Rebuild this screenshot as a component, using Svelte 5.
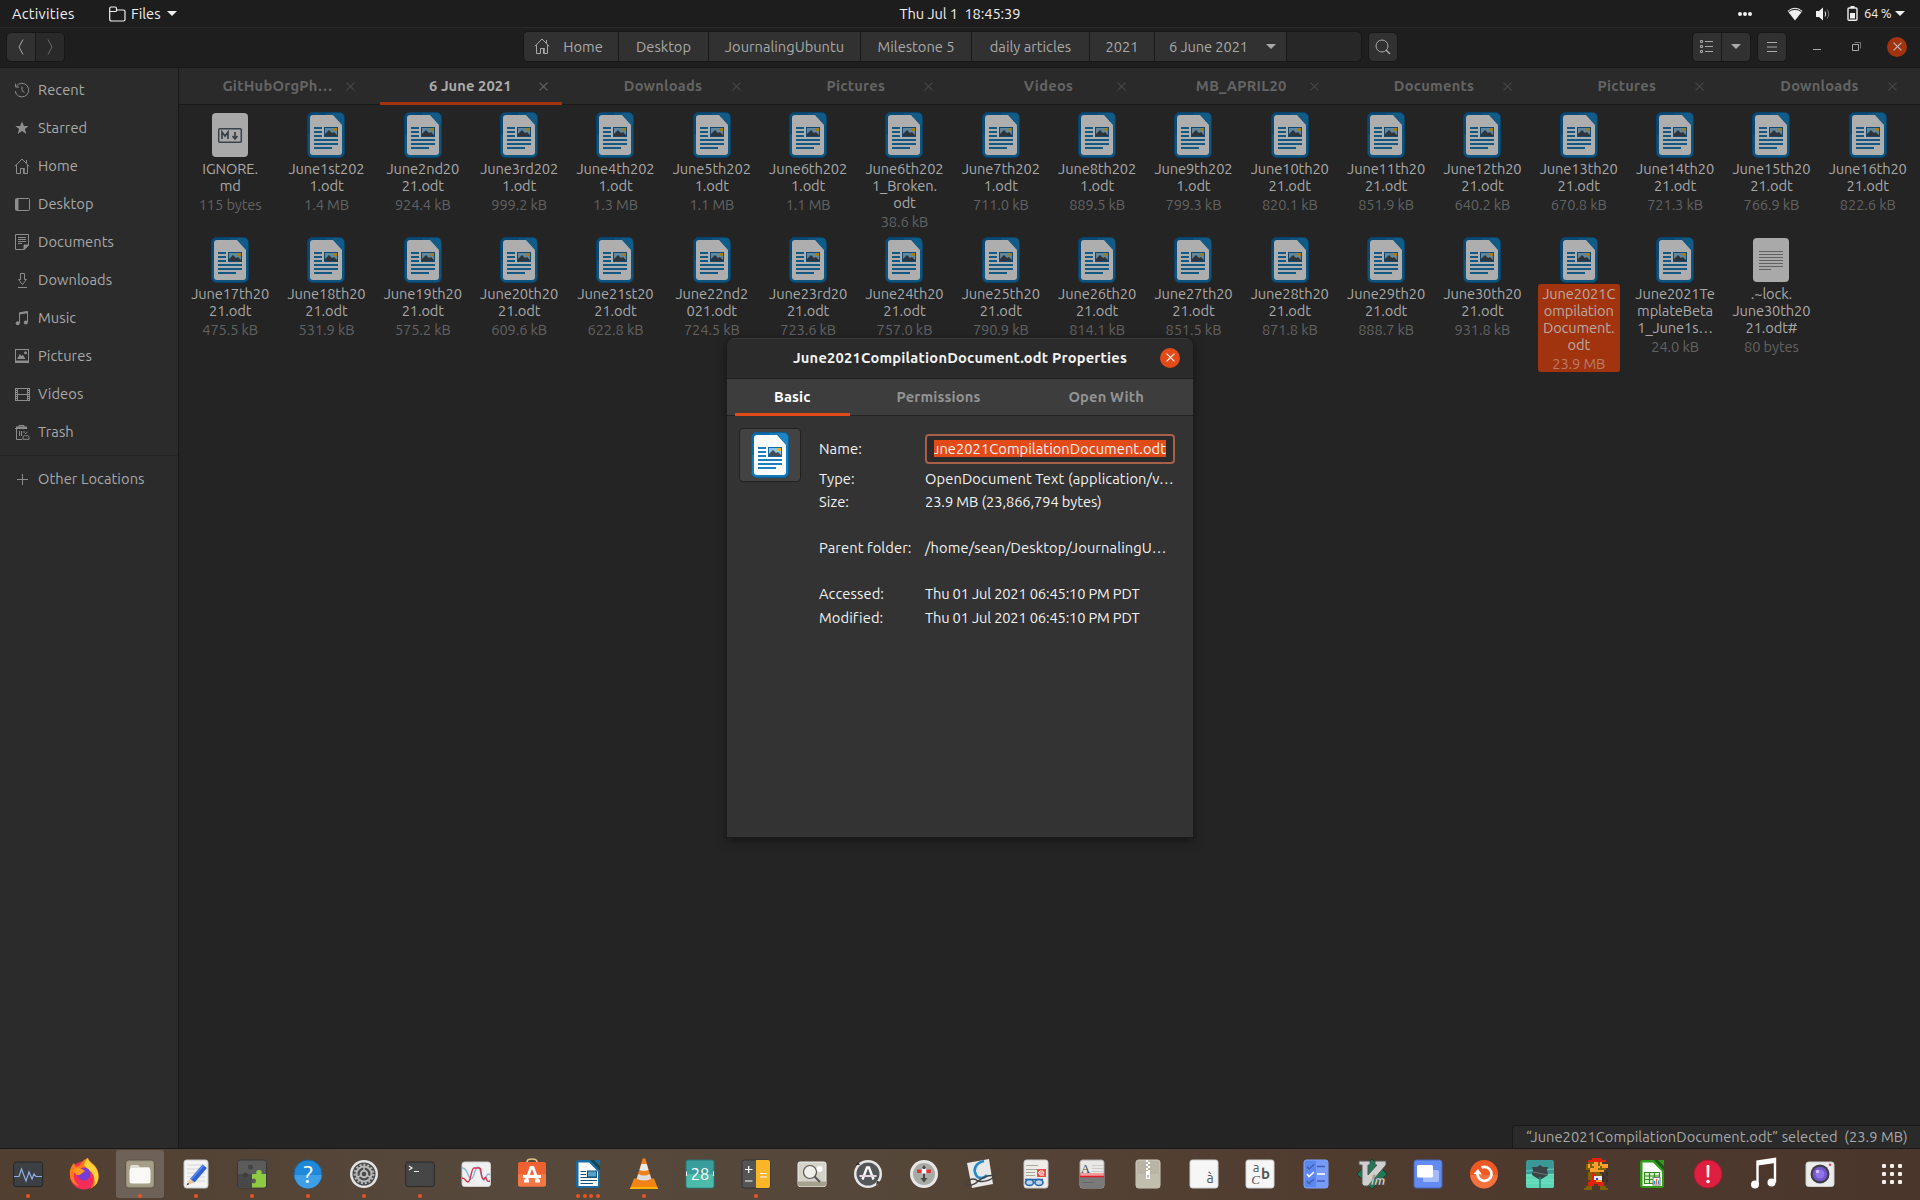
<script>
  const files = [
    ['IGNORE.\nmd', '115 bytes', 'md'],
    ['June1st202\n1.odt', '1.4 MB'], ['June2nd20\n21.odt', '924.4 kB'], ['June3rd202\n1.odt', '999.2 kB'],
    ['June4th202\n1.odt', '1.3 MB'], ['June5th202\n1.odt', '1.1 MB'], ['June6th202\n1.odt', '1.1 MB'],
    ['June6th202\n1_Broken.\nodt', '38.6 kB'], ['June7th202\n1.odt', '711.0 kB'], ['June8th202\n1.odt', '889.5 kB'],
    ['June9th202\n1.odt', '799.3 kB'], ['June10th20\n21.odt', '820.1 kB'], ['June11th20\n21.odt', '851.9 kB'],
    ['June12th20\n21.odt', '640.2 kB'], ['June13th20\n21.odt', '670.8 kB'], ['June14th20\n21.odt', '721.3 kB'],
    ['June15th20\n21.odt', '766.9 kB'], ['June16th20\n21.odt', '822.6 kB'], ['June17th20\n21.odt', '475.5 kB'],
    ['June18th20\n21.odt', '531.9 kB'], ['June19th20\n21.odt', '575.2 kB'], ['June20th20\n21.odt', '609.6 kB'],
    ['June21st20\n21.odt', '622.8 kB'], ['June22nd2\n021.odt', '724.5 kB'], ['June23rd20\n21.odt', '723.6 kB'],
    ['June24th20\n21.odt', '757.0 kB'], ['June25th20\n21.odt', '790.9 kB'], ['June26th20\n21.odt', '814.1 kB'],
    ['June27th20\n21.odt', '851.5 kB'], ['June28th20\n21.odt', '871.8 kB'], ['June29th20\n21.odt', '888.7 kB'],
    ['June30th20\n21.odt', '931.8 kB'], ['June2021C\nompilation\nDocument.\nodt', '23.9 MB', 'odt', true],
    ['June2021Te\nmplateBeta\n1_June1s…', '24.0 kB'], ['.~lock.\nJune30th20\n21.odt#', '80 bytes', 'txt']
  ].map(([name, size, kind = 'odt', selected = false]) => ({ name, size, kind, selected }));

  const tabs = ['GitHubOrgPh…', '6 June 2021', 'Downloads', 'Pictures', 'Videos', 'MB_APRIL20', 'Documents', 'Pictures', 'Downloads'];
  const places = ['Recent', 'Starred', 'Home', 'Desktop', 'Documents', 'Downloads', 'Music', 'Pictures', 'Videos', 'Trash'];
  const crumbs = [
    { t: 'Desktop', w: 90 }, { t: 'JournalingUbuntu', w: 152 }, { t: 'Milestone 5', w: 111 },
    { t: 'daily articles', w: 118 }, { t: '2021', w: 65 }
  ];
  const dock = [
    'monitor', 'firefox', 'files', 'editor', 'puzzle', 'help', 'settings', 'terminal', 'graph', 'software', 'writer',
    'vlc', 'calendar', 'calculator', 'viewer', 'updater', 'joystick', 'okular', 'reader', 'scanner', 'archive',
    'chars', 'fonts', 'todo', 'vim', 'windows', 'refresh', 'mines', 'mario', 'calc', 'alert', 'music', 'camera'
  ];
  const running = { monitor: 1, files: 1, editor: 1, puzzle: 1, help: 1, settings: 1, terminal: 1, writer: 4, vlc: 1, calculator: 1 };

  const sprite = [
    '....RRRRR....', '..RRRRRRRRR..', '..BBBSSBS....', '.BSBSSSBSSSS.', '.BSBBSSSBSSS.', '.BBSSSSBBBB..', '...SSSSSSS...',
    '..BBRBBB...k.', '..BBRRBBBk.k.', '..BBRWWWWkk..', '..BBRWPWWk.k.', '...RRRSSSk.k.', '..RRRRRRRR...', '..RRR..RRR...',
    '.BBB....BBB..', 'BBBB....BBBB.'
  ];
  const ink = { R: '#e3210b', B: '#7d6400', S: '#ffa02e', W: '#e8e4f0', P: '#4b35d8', k: '#3a302b' };
  const pixels = sprite.flatMap((row, y) => [...row].map((c, x) => ({ x, y, c })).filter((p) => p.c !== '.'));
</script>

{#snippet odt()}
  <svg viewBox="0 0 38 46" width="38" height="46">
    <rect x=".5" y=".5" width="37" height="45" rx="5" fill="#147ab8" stroke="#0a5f96" />
    <path d="M1 23V6Q1 1 6 1H19V23Z" fill="#086aab" />
    <path d="M26 1H32Q37 1 37 6V13H35Z" fill="#1a84c4" />
    <path d="M6 3H26L35 13V40Q35 43 32 43H6Q3 43 3 40V6Q3 3 6 3Z" fill="#fcfcfc" />
    <path d="M7 16H15M7 20H15M7 24H15M7 28H31M7 32H31M7 36H25" stroke="#1c7fbd" stroke-width="2" />
    <rect x="17" y="15" width="14" height="10" fill="#116aa6" />
    <rect x="18" y="16" width="12" height="8" fill="#8cc4e2" />
    <path d="M18 24V22L22 18L25 21L27 20L30 23V24Z" fill="#444c55" />
    <rect x="26.5" y="16" width="3.5" height="3" fill="#f5b416" />
  </svg>
{/snippet}

{#snippet cross(size)}
  <svg width={size} height={size} viewBox="0 0 8 8" fill="none" stroke="currentColor"><path d="M.5 .5L7.5 7.5M7.5 .5L.5 7.5" /></svg>
{/snippet}

{#snippet house()}
  <svg width="16" height="16" viewBox="0 0 16 16" fill="none" stroke="currentColor"><path d="M.8 8.4L8 1L15.2 8.4M2.5 7.2V15.5H6.5V10.5H9.5V15.5H13.5V7.2M12.5 2V5.2" /><path d="M10 10V15.5" stroke-width="1.6" /></svg>
{/snippet}

{#snippet place(name)}
  <svg width="16" height="16" viewBox="0 0 16 16" fill="none" stroke="currentColor">
    {#if name === 'Recent'}
      <path d="M2.3 4.3A6.8 6.8 0 1 1 1.2 9M1.6 1.5V5H5M8 4.5V8.5L10.5 10.5" />
    {:else if name === 'Starred'}
      <path d="M8 1.5L9.9 6H14.6L10.9 9L12.3 14L8 11.1L3.7 14L5.1 9L1.4 6H6.1Z" fill="currentColor" stroke="none" />
    {:else if name === 'Desktop'}
      <rect x="1.5" y="2.5" width="14" height="12" rx="1" /><path d="M3 3V14" stroke-width="3" />
    {:else if name === 'Documents'}
      <path d="M1.5 .5H14.5V11L10.5 15.5H1.5ZM4 3.5H12M4 5.5H12M4 7.5H12M4 9.5H8" /><path d="M10 11H14.5L10 15.5Z" fill="currentColor" />
    {:else if name === 'Downloads'}
      <path d="M6.5 1.5H10.5V7.5H12.5L8.5 12.5L4.5 7.5H6.5ZM4 15.5H13" />
    {:else if name === 'Music'}
      <path d="M5.5 13V2.8L13.5 1.5V12" /><path d="M5.5 3.5L13.5 2.3" stroke-width="2" /><circle cx="3.7" cy="13.2" r="2" fill="currentColor" stroke="none" /><circle cx="11.8" cy="12.4" r="2" fill="currentColor" stroke="none" />
    {:else if name === 'Pictures'}
      <rect x="1.5" y="1.5" width="13" height="13" /><path d="M1.5 13.5H14.5" stroke-width="2" /><path d="M3 11L6 6L7.5 8L9 6.8L11.5 11Z" fill="currentColor" stroke="none" /><circle cx="11.5" cy="4.8" r="1.5" fill="currentColor" stroke="none" />
    {:else if name === 'Videos'}
      <path d="M4 2.5H13M4 8.5H13M4 14.5H13M3.5 2V15M13.5 2V15M1.5 2V15M15.5 2V15" /><path d="M2.5 2V15M14.5 2V15" stroke-dasharray="1 1" />
    {:else}
      <path d="M1 4.5H13M2.5 4.5V15.5H8M5 4V1.5H10V4M5.5 7V12M7.5 7V12M10 7V9" /><path d="M2 3.5H13" stroke-width="2" /><path d="M9 14C9 11 11 11 12 12C14 11 15.5 12 15 15.3H9ZM11 10L13.5 8" />
    {/if}
  </svg>
{/snippet}

{#snippet app(name)}
  <svg width="32" height="34" viewBox="0 0 32 34">
    {#if name === 'monitor'}
      <rect x="1.7" y="5" width="29" height="24.5" rx="2.5" fill="#3d4043" stroke="#222527" /><path d="M2 19.5H7L9.5 12L14 24L17 15L20 22L22 17L24 19.5H30" fill="none" stroke="#91aee9" stroke-width="1.2" />
    {:else if name === 'firefox'}
      <circle cx="16" cy="18.5" r="14" fill="#f52d58" /><path d="M2 18C1 13 4 8 6 6L8 10L12 8C13 5 18 1 20 1C20 4 27 7 29 12C33 21 29 29 22 32C27 26 27 19 22 13C18 9 10 10 6 17C5 22 8 27 12 29C5 28 2 23 2 18Z" fill="#ff7a1a" /><path d="M16 8C17 4 19 2 20 1C20 5 27 8 29 13C32 20 30 27 26 29C28 23 26 17 22 14Z" fill="#ffd13a" /><circle cx="16" cy="17" r="6.5" fill="#7a3ad6" /><path d="M5 13Q9 8 17 14L13 17Q9 20 7 16Z" fill="#ff9a1f" />
    {:else if name === 'files'}
      <rect x="1.5" y="3" width="29" height="28" rx="3" fill="#989078" stroke="#5d5748" /><rect x="3" y="4.5" width="26" height="25" rx="2" fill="#a69e88" /><path d="M6 11Q6 8 8 8H14L16 10H24Q26 10 26 12V15H6Z" fill="#e0ddd3" /><rect x="5.5" y="11" width="21" height="15.5" rx="2.5" fill="#faf9f6" />
    {:else if name === 'editor'}
      <rect x="4" y="3" width="24" height="28" rx="2.5" fill="#f4f4f4" stroke="#c7c7c7" /><path d="M7 8H25M7 12H25M7 16H25M7 20H25M7 24H25" stroke="#d5d5d5" /><path d="M10 22L22.5 7.5L27 11L14.5 25.5Z" fill="#2c62d4" /><path d="M11 22.5L23.5 8.5" stroke="#5b8bf0" stroke-width="1.5" /><path d="M10 22L14.5 25.5L7 28Z" fill="#f0c592" /><path d="M8 25.5L9 27.3L6.5 28.2Z" fill="#222" />
    {:else if name === 'puzzle'}
      <rect x="1.5" y="3" width="29" height="28" rx="2.5" fill="#5b5b5c" stroke="#363636" /><path d="M2 17H16V31H4Q2 31 2 29Z" fill="#484849" /><path d="M16 17H20.5Q19.5 13 23 13Q26.500 13 25.500 17H30V28.500Q30 30.500 28 30.500H16V26Q20 27.500 20 24Q20 20.500 16 22Z" fill="#8fcb42" /><circle cx="9.500" cy="18" r="2.500" fill="#3f3f40" /><circle cx="14.500" cy="10" r="2.500" fill="#444" />
    {:else if name === 'help'}
      <circle cx="16" cy="17" r="14" fill="#2088d8" stroke="#17639f" /><path d="M2.500 18H29.500A13.500 13.500 0 0 1 2.500 18" fill="#3e9fe6" /><text x="16" y="26" class="g" font-size="25" fill="#fff">?</text>
    {:else if name === 'settings'}
      <circle cx="16" cy="17" r="14" fill="#e3e3e3" /><circle cx="16" cy="17" r="11.500" fill="#4a4a4a" /><circle cx="16" cy="17" r="7.500" fill="none" stroke="#b9b9b9" stroke-width="2" /><circle cx="16" cy="17" r="9.300" fill="none" stroke="#b9b9b9" stroke-width="2" stroke-dasharray="2 1.900" /><circle cx="16" cy="17" r="3.300" fill="none" stroke="#b9b9b9" stroke-width="2" /><path d="M16 10V14M10 20L13 18.500M22 20L19 18.500" stroke="#b9b9b9" stroke-width="1.500" />
    {:else if name === 'terminal'}
      <rect x="1.700" y="5" width="28.600" height="24.500" rx="2.500" fill="#464646" stroke="#292929" /><path d="M5 9L8 11L5 13M10 14.500H15" fill="none" stroke="#eee" stroke-width="1.200" />
    {:else if name === 'graph'}
      <rect x="2" y="5" width="28.500" height="24.500" rx="2.500" fill="#f0f0f0" stroke="#ccc" /><path d="M2 11C8 10 8 22 11 22S15 10 18 10S21 23 24 23S26 14 30 18" fill="none" stroke="#86b5dc" stroke-width="1.400" /><path d="M2 21C6 21 5 25 8 25S11 11 14 11S16 11 19 11S20 14 22 20S25 18 26 21S28 25 30 24" fill="none" stroke="#d8324c" stroke-width="1.400" />
    {:else if name === 'software'}
      <path d="M11 8V5Q11 2 16 2T21 5V8" fill="none" stroke="#e6c48a" stroke-width="1.700" /><rect x="2" y="5" width="28" height="24.500" rx="2" fill="#ef6130" /><path d="M2 17H30V27.500Q30 29.500 28 29.500H4Q2 29.500 2 27.500Z" fill="#f47846" /><path d="M10.500 23L15 10.500H17L21.500 23M7 19.500H25M8 24H13M19 24H24" fill="none" stroke="#fff" stroke-width="2.800" />
    {:else if name === 'writer' || name === 'calc'}
      {@const c = name === 'writer' ? '#176aa2' : '#2f9b16'}
      <rect x="4" y="3" width="24" height="28" rx="2.500" fill={c} /><path d="M6.500 5.500H17L26 14.500V29H6.500Z" fill="#fafafa" /><path d="M18 3L28 13.500V5Q28 3 26 3Z" fill="#16321f" opacity=".650" /><path d="M22 3H28V9Z" fill={c} />
      {#if name === 'writer'}
        <path d="M8.500 14.500H14M8.500 17.500H14M8.500 20.500H25M8.500 23.500H25M8.500 26.500H21" stroke="#14527d" stroke-width="1.200" /><rect x="15.500" y="14" width="9" height="6" fill="#54a2ca" stroke="#174e72" />
      {:else}
        <path d="M8.500 15.500H23.500V26.500H8.500ZM8.500 19H23.500M8.500 22.500H23.500M13.500 15.500V26.500M18.500 15.500V26.500" fill="#d9f4ca" stroke="#2e8c1d" stroke-width="1.200" /><rect x="17" y="20.500" width="7" height="7.500" fill="#fff" stroke="#777" /><path d="M18.500 27V24" stroke="#2b80c9" stroke-width="1.500" /><path d="M20.500 27V22" stroke="#e5673c" stroke-width="1.500" /><path d="M22.500 27V23.500" stroke="#2b80c9" />
      {/if}
    {:else if name === 'vlc'}
      <path d="M6 21.500H26L30 32H2Z" fill="#f28413" /><path d="M2.800 30H29.200L30 32H2Z" fill="#ffb000" /><path d="M14.500 2Q16 .5 17.500 2L24 24Q16 29 8 24Z" fill="#f0801a" /><path d="M13.300 7H18.700L20.500 13Q16 15 11.500 13Z" fill="#e9e9e9" /><path d="M10.200 17Q16 20 21.800 17L23.300 22Q16 25 8.700 22Z" fill="#ddd" />
    {:else if name === 'calendar'}
      <rect x="2" y="3" width="28" height="28" rx="2" fill="#399d9c" stroke="#267774" /><path d="M2.500 17H29.500V29Q29.500 30.500 28 30.500H4Q2.500 30.500 2.500 29Z" fill="#4dbbaa" /><path d="M2.500 14.500V19M29.500 14.500V19" stroke="#fff" /><text x="16" y="23" class="g" font-size="16.500" fill="#fff">28</text>
    {:else if name === 'calculator'}
      <rect x="2" y="3" width="28" height="28" rx="2.500" fill="#555" stroke="#323232" /><path d="M16 3H28Q30 3 30 5V29Q30 31 28 31H16Z" fill="#fbb628" /><path d="M5 12.500H12.500M8.700 9V16M5 24H12.500M20 16.500H27M20 20H27" stroke="#fff" stroke-width="1.200" />
    {:else if name === 'viewer'}
      <rect x="2" y="5" width="28" height="24.500" rx="2" fill="#d5d3c9" stroke="#eee" /><path d="M2 24.500H30V28L28 29.500H4L2 28Z" fill="#a6a18e" /><circle cx="23.500" cy="12" r="3" fill="#fff" /><circle cx="14" cy="15" r="6.500" fill="#efefec" stroke="#56544e" stroke-width="1.200" /><path d="M18.500 19.500L24 25" stroke="#555" stroke-width="2" />
    {:else if name === 'updater'}
      <circle cx="16" cy="17" r="14" fill="#e7e7e7" /><circle cx="16" cy="17" r="11.500" fill="#54565a" /><path d="M10.500 22.500L15 10.500H17L21.500 22.500" fill="none" stroke="#fff" stroke-width="2.400" /><path d="M7.500 19H24.500" stroke="#e9d6e4" stroke-width="2" /><path d="M4 8L6 5L8 8ZM24 28L29 25L25 24Z" fill="#333" />
    {:else if name === 'joystick'}
      <circle cx="16" cy="17" r="14" fill="#e6e6e6" /><circle cx="16" cy="17" r="11" fill="#a9aca5" /><path d="M16 8L18 11H17V21H19.500L16 25.500L12.500 21H15V11H14Z" fill="#4a4a4a" /><rect x="9" y="12.500" width="14" height="3.500" rx="1" fill="#e6303c" /><rect x="13.700" y="12" width="4.600" height="4.500" fill="#fff" />
    {:else if name === 'okular'}
      <path d="M3 6L25 2L29 27L8 31Z" fill="#e8e8e8" /><path d="M20 4C11 6 9 13 12 18C14 22 20 22 23 18" fill="none" stroke="#2488c9" stroke-width="2.600" /><path d="M1 27Q8 19 14 24Q22 26 30 20M2 28Q10 29 14 24Q24 17 31 19" fill="none" stroke="#444" stroke-width="1.500" />
    {:else if name === 'reader'}
      <rect x="4" y="3" width="24" height="28" rx="2.500" fill="#edece8" stroke="#ccc" /><path d="M6 8.500H18M6 12.500H26M6 15.500H15M6 18.500H15" stroke="#aaa799" /><rect x="17" y="12" width="9" height="8" fill="#e94f45" /><path d="M19 16H24Q23 13 20 14T20 18H24" fill="none" stroke="#fff" /><path d="M5 22.500H23M14 23.500L15 22" stroke="#2565ac" stroke-width="1.300" /><ellipse cx="9.500" cy="25.500" rx="4" ry="3" fill="#bcd5ed" stroke="#2565ac" stroke-width="1.600" /><ellipse cx="19" cy="25.500" rx="4" ry="3" fill="#bcd5ed" stroke="#2565ac" stroke-width="1.600" />
    {:else if name === 'scanner'}
      <rect x="4" y="3" width="24" height="28" rx="2.500" fill="#e9e8e6" stroke="#aaa" /><path d="M4 19H28V29Q28 31 26 31H6Q4 31 4 29Z" fill="#7a7a7a" /><text x="9.500" y="16" class="g serif" font-size="13" fill="#444">A</text><path d="M16 8.500H27M16 11.500H27M16 14.500H27" stroke="#ccc" /><path d="M4 17.500H28" stroke="#f33" stroke-width="3" opacity=".4" /><path d="M4 19.500H28" stroke="#e31b22" stroke-width="1.500" /><path d="M6 25.500H17" stroke="#686868" />
    {:else if name === 'archive'}
      <rect x="4" y="3" width="24" height="28" rx="2.500" fill="#b9b4a4" stroke="#d0ccbf" /><path d="M4 17H28V29Q28 31 26 31H6Q4 31 4 29Z" fill="#c2beae" /><path d="M15 3V15" stroke="#fff" stroke-width="2" stroke-dasharray="2 2" /><path d="M17 5V15" stroke="#fff" stroke-width="2" stroke-dasharray="2 2" /><path d="M14 14H18V22H14Z" fill="#fff" /><rect x="15.500" y="18" width="1" height="2.500" fill="#777" />
    {:else if name === 'chars'}
      <rect x="2" y="3" width="28" height="28" rx="2.500" fill="#f6f6f6" stroke="#d1d1d1" /><text x="22" y="26" class="g" font-size="14" fill="#555">à</text>
    {:else if name === 'fonts'}
      <rect x="2" y="3" width="28" height="28" rx="2.500" fill="#f6f6f6" stroke="#d1d1d1" /><text x="12" y="15" class="g" font-size="13" fill="#555">a</text><text x="11.500" y="27" class="g serif" font-size="13" font-style="italic" fill="#555">C</text><text x="21.500" y="22" class="g" font-size="15" font-weight="600" fill="#555">b</text>
    {:else if name === 'todo'}
      <rect x="4" y="3" width="24" height="28" rx="2.500" fill="#5d87f0" stroke="#88a8f7" /><path d="M16 3H26Q28 3 28 5V29Q28 31 26 31H16Z" fill="#779cf8" /><path d="M7 9.500L9 12L14 7.500M7 24L9 26.500L14 22M17 9.500H25M17 24H25" fill="none" stroke="#405fae" stroke-width="1.400" /><path d="M7 17L9 19.500L14 15M17 17H25" fill="none" stroke="#fff" stroke-width="1.600" />
    {:else if name === 'vim'}
      <path d="M16 2L31 17L16 32L1 17Z" fill="#1e7a55" stroke="#103f30" /><path d="M3 4H14V8H12V18L21 8H19V4H30V8L12 29H8L6 27V8H3Z" fill="#cfcfcf" stroke="#555" /><text x="22" y="28" class="g" font-size="13" font-weight="700" font-style="italic" fill="#e4e4e4" stroke="#444" stroke-width=".4">im</text>
    {:else if name === 'windows'}
      <rect x="2" y="3" width="28" height="28" rx="2.500" fill="#648bf1" stroke="#4266be" /><rect x="11" y="13" width="16" height="12" rx="1.500" fill="#a4bbf9" /><rect x="5" y="8" width="16" height="12.500" rx="1.500" fill="#fff" />
    {:else if name === 'refresh'}
      <circle cx="16" cy="17" r="14" fill="#ee5823" /><path d="M2.500 18H29.500A13.500 13.500 0 0 1 2.500 18" fill="#f3723e" /><path d="M13.500 10.500A7 7 0 1 1 9.500 17" fill="none" stroke="#fff" stroke-width="2.700" /><path d="M5.500 17L10 12L14 17.500Z" fill="#fff" />
    {:else if name === 'mines'}
      <rect x="2" y="3" width="28" height="28" rx="2" fill="#3a9896" /><path d="M2 17H30V29Q30 31 28 31H4Q2 31 2 29Z" fill="#5cd6b4" /><path d="M2 14L30 12M2 19L30 17M2 23H30M2 26H30" stroke="#88ead0" opacity=".6" /><path d="M16 8L19 10L24 10L23 13L24 18L16 23L8 18L9 13L8 10H13Z" fill="#3b4346" /><path d="M16 20V31" stroke="#2d8575" stroke-width="1.500" /><path d="M9 15L24 18" stroke="#6a7678" />
    {:else if name === 'mario'}
      <g transform="translate(4 1) scale(2)" shape-rendering="crispEdges">{#each pixels as p}<rect x={p.x} y={p.y} width="1" height="1" fill={ink[p.c]} />{/each}</g>
    {:else if name === 'alert'}
      <circle cx="16" cy="17" r="14" fill="#df1f3f" stroke="#ae1730" /><path d="M15 8.500H17L16.700 20H15.300Z" fill="#fff" stroke="#fff" /><circle cx="16" cy="24.500" r="1.800" fill="#fff" />
    {:else if name === 'music'}
      <path d="M9.500 27V4.500L27 2V25.500" fill="none" stroke="#fff" stroke-width="2.400" /><path d="M9.500 6.500L27 4" stroke="#fff" stroke-width="4" /><circle cx="7" cy="27.500" r="4" fill="#fff" /><circle cx="23.500" cy="25.500" r="4" fill="#fff" />
    {:else if name === 'camera'}
      <rect x="2" y="5" width="28" height="24.500" rx="2.500" fill="#ececec" stroke="#ccc" /><circle cx="16" cy="17" r="9.500" fill="#3e3e45" /><circle cx="16" cy="17" r="7.300" fill="#7455ca" /><circle cx="16" cy="17" r="4.500" fill="#8f73ea" /><circle cx="13.500" cy="14.500" r="1.700" fill="#d0c4ff" /><circle cx="26" cy="7.700" r="1.200" fill="#e84141" />
    {/if}
  </svg>
{/snippet}

<div class="screen">
  <header class="topbar">
    <span class="activities">Activities</span>
    <svg class="folder" width="17" height="16" viewBox="0 0 17 16" fill="none" stroke="currentColor" stroke-width="1.200"><path d="M.700 13V2.500Q.700 1 2 1H6Q7.500 1 7.500 2.500V4H14.500Q16 4 16 5.500V13.500Q16 15 14.500 15H2.500Q.700 15 .700 13ZM.700 5.500H7L8 4" /></svg>
    <span class="menu">Files</span>
    <i class="tri"></i>
    <span class="clock">Thu Jul 1&nbsp; 18:45:39</span>
    <div class="status">
      <svg width="14" height="4" viewBox="0 0 14 4" fill="currentColor"><circle cx="2" cy="2" r="2" /><circle cx="7" cy="2" r="2" /><circle cx="12" cy="2" r="2" /></svg>
      <svg class="wifi" width="16" height="14" viewBox="0 0 16 14"><path d="M.5 4Q8 -2.500 15.500 4L8 13.500Z" fill="currentColor" /><path d="M1.500 4.700Q8 0 14.500 4.700" fill="none" stroke="#1d1d1d" /></svg>
      <svg class="vol" width="15" height="14" viewBox="0 0 15 14"><path d="M0 4H3L7 .500V13.500L3 10H0Z" fill="currentColor" /><path d="M9 4.500Q10.500 7 9 9.500" fill="none" stroke="currentColor" /><path d="M11 2.500Q14.500 7 11 11.500" fill="none" stroke="#777" /></svg>
      <svg class="bat" width="11" height="15" viewBox="0 0 11 15"><path d="M3.500 0H7.500V2H3.500Z" fill="currentColor" /><rect x="1" y="2" width="9" height="12.300" fill="none" stroke="currentColor" stroke-width="1.400" rx="1" /><rect x="3" y="7" width="5" height="5.500" fill="currentColor" /></svg>
      <span>64 %</span>
      <i class="tri"></i>
    </div>
  </header>

  <div class="toolbar">
    <div class="group nav">
      <button aria-label="Back"><svg width="6" height="16" viewBox="0 0 6 16" fill="none" stroke="currentColor"><path d="M5 .5L1 8L5 15.500" /></svg></button>
      <button class="off" aria-label="Forward"><svg width="6" height="16" viewBox="0 0 6 16" fill="none" stroke="currentColor"><path d="M1 .5L5 8L1 15.500" /></svg></button>
    </div>
    <div class="path">
      <span class="crumb home">{@render house()}Home</span>
      {#each crumbs as c}<span class="crumb" style:width="{c.w}px">{c.t}</span>{/each}
      <span class="crumb last">6 June 2021<i class="tri"></i></span>
    </div>
    <div class="group search">
      <button aria-label="Search"><svg width="16" height="16" viewBox="0 0 16 16" fill="none" stroke="currentColor"><circle cx="7" cy="7" r="6" /><path d="M11 11L15 15" stroke-width="1.500" /></svg></button>
    </div>
    <div class="right">
      <div class="group">
        <button aria-label="List"><svg width="14" height="13" viewBox="0 0 14 13" fill="none" stroke="currentColor"><path d="M.5 .5H2.500V2.500H.5ZM.5 5.500H2.500V7.500H.5ZM.5 10.500H2.500V12.500H.5ZM5 1.500H13M5 6.500H13M5 11.500H13" /></svg></button>
        <button aria-label="View options"><i class="tri"></i></button>
      </div>
      <div class="group"><button aria-label="Menu"><svg width="10" height="10" viewBox="0 0 10 10" stroke="currentColor"><path d="M0 .5H10M0 5H10M0 9.500H10" /></svg></button></div>
      <i class="min"></i>
      <svg class="restore" width="9" height="9" viewBox="0 0 9 9" fill="none" stroke="currentColor"><path d="M.5 2.500H6.500V8.500H.5Z" /><path d="M2.500 .5H8.500V6.500" opacity=".6" /></svg>
      <span class="close">{@render cross(9)}</span>
    </div>
  </div>

  <div class="main">
    <aside>
      <ul>
        {#each places as p}
          <li>{#if p === 'Home'}{@render house()}{:else}{@render place(p)}{/if}<span>{p}</span></li>
        {/each}
      </ul>
      <div class="other"><svg width="16" height="16" viewBox="0 0 16 16" stroke="currentColor"><path d="M8.500 3V14M3 8.500H14" /></svg><span>Other Locations</span></div>
    </aside>
    <section>
      <nav class="tabs">
        {#each tabs as t, i}
          <div class="tab" class:on={i === 1}><span>{t}</span><i class="x">{@render cross(9)}</i></div>
        {/each}
      </nav>
      <div class="files">
        {#each files as f}
          <div class="file" class:selected={f.selected}>
            <div class="thumb">
              {#if f.kind === 'odt'}{@render odt()}
              {:else}
                <svg width="38" height="46" viewBox="0 0 38 46">
                  <rect x="1" y="1" width="36" height="44" rx="4" fill="#f5f5f5" />
                  {#if f.kind === 'md'}
                    <rect x="7.700" y="16.700" width="22.600" height="13.600" rx="1" fill="none" stroke="#50606b" stroke-width="1.500" /><path d="M11 27V20L14 24L17 20V27M24 20V26M21.500 24L24 27L26.500 24" fill="none" stroke="#50606b" stroke-width="1.700" />
                  {:else}
                    <path d="M7 14.500H31M7 17.500H31M7 20.500H31M7 23.500H31M7 26.500H31M7 29.500H31M7 32.500H19" stroke="#8c8c8c" />
                  {/if}
                </svg>
              {/if}
            </div>
            <div class="label"><div class="name">{f.name}</div><div class="size">{f.size}</div></div>
          </div>
        {/each}
      </div>
    </section>
  </div>

  <footer>
    {#each dock as d}
      <div class="app" class:active={d === 'files'}>
        {@render app(d)}
        <div class="dots">{#each Array(running[d] ?? 0) as _}<i></i>{/each}</div>
      </div>
    {/each}
    <svg class="grid" width="22" height="22" viewBox="0 0 22 22" fill="#f2f0ee">
      {#each [0, 8, 16] as y}{#each [0, 8, 16] as x}<rect x={x + 1} y={y + 1} width="4" height="4" rx="1" />{/each}{/each}
    </svg>
  </footer>

  <div class="statusbar">“June2021CompilationDocument.odt” selected&nbsp; (23.9 MB)</div>

  <div class="dialog">
    <div class="title"><span>June2021CompilationDocument.odt Properties</span><i class="close bright">{@render cross(9)}</i></div>
    <div class="dtabs"><span class="on">Basic</span><span>Permissions</span><span>Open With</span></div>
    <div class="body">
      <div class="iconbtn">{@render odt()}</div>
      <dl>
        <dt>Name:</dt><dd class="entry"><span><b>June2021CompilationDocument.odt</b></span></dd>
        <dt>Type:</dt><dd class="type">OpenDocument Text (application/v…</dd>
        <dt>Size:</dt><dd class="bytes">23.9 MB (23,866,794 bytes)</dd>
        <dt>Parent folder:</dt><dd class="type">/home/sean/Desktop/JournalingU…</dd>
        <dt>Accessed:</dt><dd class="date">Thu 01 Jul 2021 06:45:10 PM PDT</dd>
        <dt>Modified:</dt><dd class="date">Thu 01 Jul 2021 06:45:10 PM PDT</dd>
      </dl>
    </div>
  </div>
</div>

<style>
  :global(body) { background: #242424; overflow: hidden; }
  * { box-sizing: border-box; }
  .screen { position: relative; width: 1920px; height: 1200px; display: flex; flex-direction: column; background: #242424; color: #a9a9a9; font: 14.667px/17px Ubuntu, 'Noto Sans', sans-serif; white-space: nowrap; overflow: hidden; }
  svg { display: block; flex: none; }
  i { font-style: normal; }
  button { all: unset; box-sizing: border-box; display: grid; place-items: center; }
  .tri { display: block; width: 0; height: 0; border: 5px solid transparent; border-top-color: currentColor; border-bottom: 0; }

  .topbar { flex: none; height: 28px; display: flex; align-items: center; background: #1d1d1d; border-bottom: 1px solid #2a2a2a; color: #f0f0f0; padding: 0 15px 0 12px; position: relative; }
  .activities { width: 97px; letter-spacing: .250px; padding-bottom: 1px; }
  .menu { width: 31px; margin: 0 5px 0 5px; padding-bottom: 1px; }
  .clock { position: absolute; left: 0; right: 0; text-align: center; letter-spacing: -.100px; padding-bottom: 1px; }
  .status { margin-left: auto; display: flex; align-items: center; }
  .status span { width: 28px; font-size: 13px; margin-left: 6px; margin-right: 3px; letter-spacing: -.300px; padding-bottom: 1px; }
  .wifi { margin-left: 35px; }
  .vol { margin-left: 13px; }
  .bat { margin-left: 16px; }

  .toolbar { flex: none; height: 40px; display: flex; align-items: center; background: #1e1e1e; border-bottom: 1px solid #191919; padding: 0 13px 2px 6px; }
  .group { display: flex; height: 30px; border: 1px solid #171717; border-radius: 5px; background: #313131; overflow: hidden; }
  .group button { width: 28px; height: 28px; }
  .group button + button { border-left: 1px solid #1a1a1a; width: 29px; }
  .group .off { background: #292929; color: #6a6a6a; }
  .path { width: 839px; height: 31px; display: flex; margin-left: 458px; background: #272727; border: 1px solid #181818; border-radius: 5px; overflow: hidden; }
  .crumb { display: flex; align-items: center; justify-content: center; background: #313131; border-right: 1px solid #191919; padding-bottom: 1px; }
  .home { width: 95px; gap: 13px; padding-right: 5px; }
  .last { width: 132px; gap: 18px; padding-left: 4px; letter-spacing: -.100px; }
  .search { margin-left: 6px; }
  .right { margin-left: auto; display: flex; align-items: center; }
  .right .group + .group { margin-left: 6px; }
  .min { width: 8px; height: 1px; background: #a9a9a9; margin: 5px 31px 0 26px; }
  .restore { margin-right: 26px; }
  .close { display: grid; place-items: center; width: 20px; height: 20px; border-radius: 50%; background: #a1330f; color: #bbb; }

  .main { flex: 1; display: flex; min-height: 0; }
  aside { flex: none; width: 179px; background: #2b2b2b; border-right: 1px solid #191919; }
  ul { list-style: none; margin: 0; padding: 3px 0 4px; border-bottom: 1px solid #242424; }
  li, .other { display: flex; align-items: center; height: 38px; padding-left: 14px; gap: 8px; color: #8d8d8d; letter-spacing: .070px; }
  li span, .other span { color: #a9a9a9; padding-bottom: 2px; }
  .other { height: 46px; }
  section { flex: 1; min-width: 0; }
  .tabs { height: 37px; display: flex; justify-content: space-between; padding: 0 9px 0 8px; background: #2a2a2a; border-bottom: 1px solid #191919; }
  .tab { width: 182px; height: 37px; display: flex; align-items: center; justify-content: center; font-weight: 600; letter-spacing: .250px; color: #646464; position: relative; border-bottom: 3px solid transparent; padding-top: 1px; padding-right: 1px; }
  .tab.on { color: #acacac; border-bottom-color: #a1330f; letter-spacing: .100px; }
  .x { position: absolute; right: 14px; top: 14px; color: #474747; }
  .on .x { color: #666; }
  .files { display: grid; grid-template-columns: repeat(18, 96.330px); grid-auto-rows: 125px; padding: 7px 0 0 3px; }
  .file { display: flex; flex-direction: column; align-items: center; }
  .thumb { filter: brightness(.690); margin-bottom: 1px; }
  .label { width: 82px; text-align: center; border-radius: 3px; padding: 1px 0 0; height: 54px; letter-spacing: -.120px; }
  .name { white-space: pre; }
  .size { margin-top: 2px; color: #626262; }
  .selected .label { height: 88px; background: #a1330f; color: #b9aaa4; }
  .selected .size { color: #bb7c66; }

  footer { flex: none; height: 52px; display: flex; background: linear-gradient(90deg, #513f31, #56493c 27%, #554739 45%, #503b2f 70%, #4a362b); border-top: 1px solid #1b1917; padding-left: 4px; gap: 8px; }
  .app { width: 48px; height: 48px; margin-top: 1px; padding-top: 7px; display: flex; flex-direction: column; align-items: center; border-radius: 3px; }
  .active { background: #6e6157; }
  .dots { display: flex; gap: 2.500px; margin-top: 3px; }
  .dots i { width: 4px; height: 4px; border-radius: 50%; background: #e95420; }
  .grid { margin: 14px 0 0 29px; }
  svg text.g { font-family: Ubuntu, 'Noto Sans', sans-serif; text-anchor: middle; letter-spacing: 0; }
  svg text.serif { font-family: 'Liberation Serif', serif; }

  .statusbar { position: absolute; right: 0; top: 1125px; width: 408px; height: 24px; line-height: 21px; padding-left: 13px; background: #2a2a2a; border: 1px solid #181818; border-right: 0; border-radius: 4px 0 0; letter-spacing: .040px; }

  .dialog { position: absolute; left: 727px; top: 338px; width: 466px; height: 499px; background: #333; border-radius: 8px 8px 0 0; color: #f2f2f2; box-shadow: 0 0 0 1px #1b1b1b, 0 3px 10px rgba(0, 0, 0, .5); overflow: hidden; }
  .title { height: 41px; display: flex; align-items: center; justify-content: flex-end; background: #2b2b2b; border-top: 1px solid #3a3a3a; border-bottom: 1px solid #1f1f1f; padding: 0 13px 2px 0; font-weight: 600; letter-spacing: .210px; }
  .title span { margin-right: 33px; width: 334px; padding-bottom: 1px; }
  .bright { background: #e24a18; color: #fff; }
  .dtabs { height: 37px; display: flex; gap: 10px; padding: 0 8px; background: #3d3d3d; border-bottom: 1px solid #222; color: #939393; font-weight: 600; letter-spacing: .150px; }
  .dtabs span { height: 37px; line-height: 36px; text-align: center; width: 158px; border-bottom: 3px solid transparent; }
  .dtabs .on { width: 115px; color: #fff; border-bottom-color: #e24a18; }
  .body { display: flex; padding: 12px 0 0 12px; }
  .iconbtn { width: 62px; height: 54px; display: grid; place-items: center; background: #434343; border: 1px solid #212121; border-radius: 4px; padding-bottom: 1px; }
  dl { margin: 6px 0 0 18px; height: 200px; display: grid; grid-template-columns: 106px 250px; grid-template-rows: 30px 30px 17px 74px 18px 31px; align-items: center; letter-spacing: .100px; }
  dt, dd { margin: 0; padding-bottom: 2px; }
  .type { letter-spacing: .120px; }
  .bytes { letter-spacing: -.080px; }
  .date { letter-spacing: -.160px; }
  .entry { height: 30px; border: 2px solid #a6604a; border-radius: 4px; background: #2b2b2b; padding: 4px 7px; overflow: hidden; letter-spacing: .050px; }
  .entry span { display: flex; justify-content: flex-end; overflow: hidden; background: #e24a18; width: 232px; height: 17px; }
  b { font-weight: 400; }
</style>
